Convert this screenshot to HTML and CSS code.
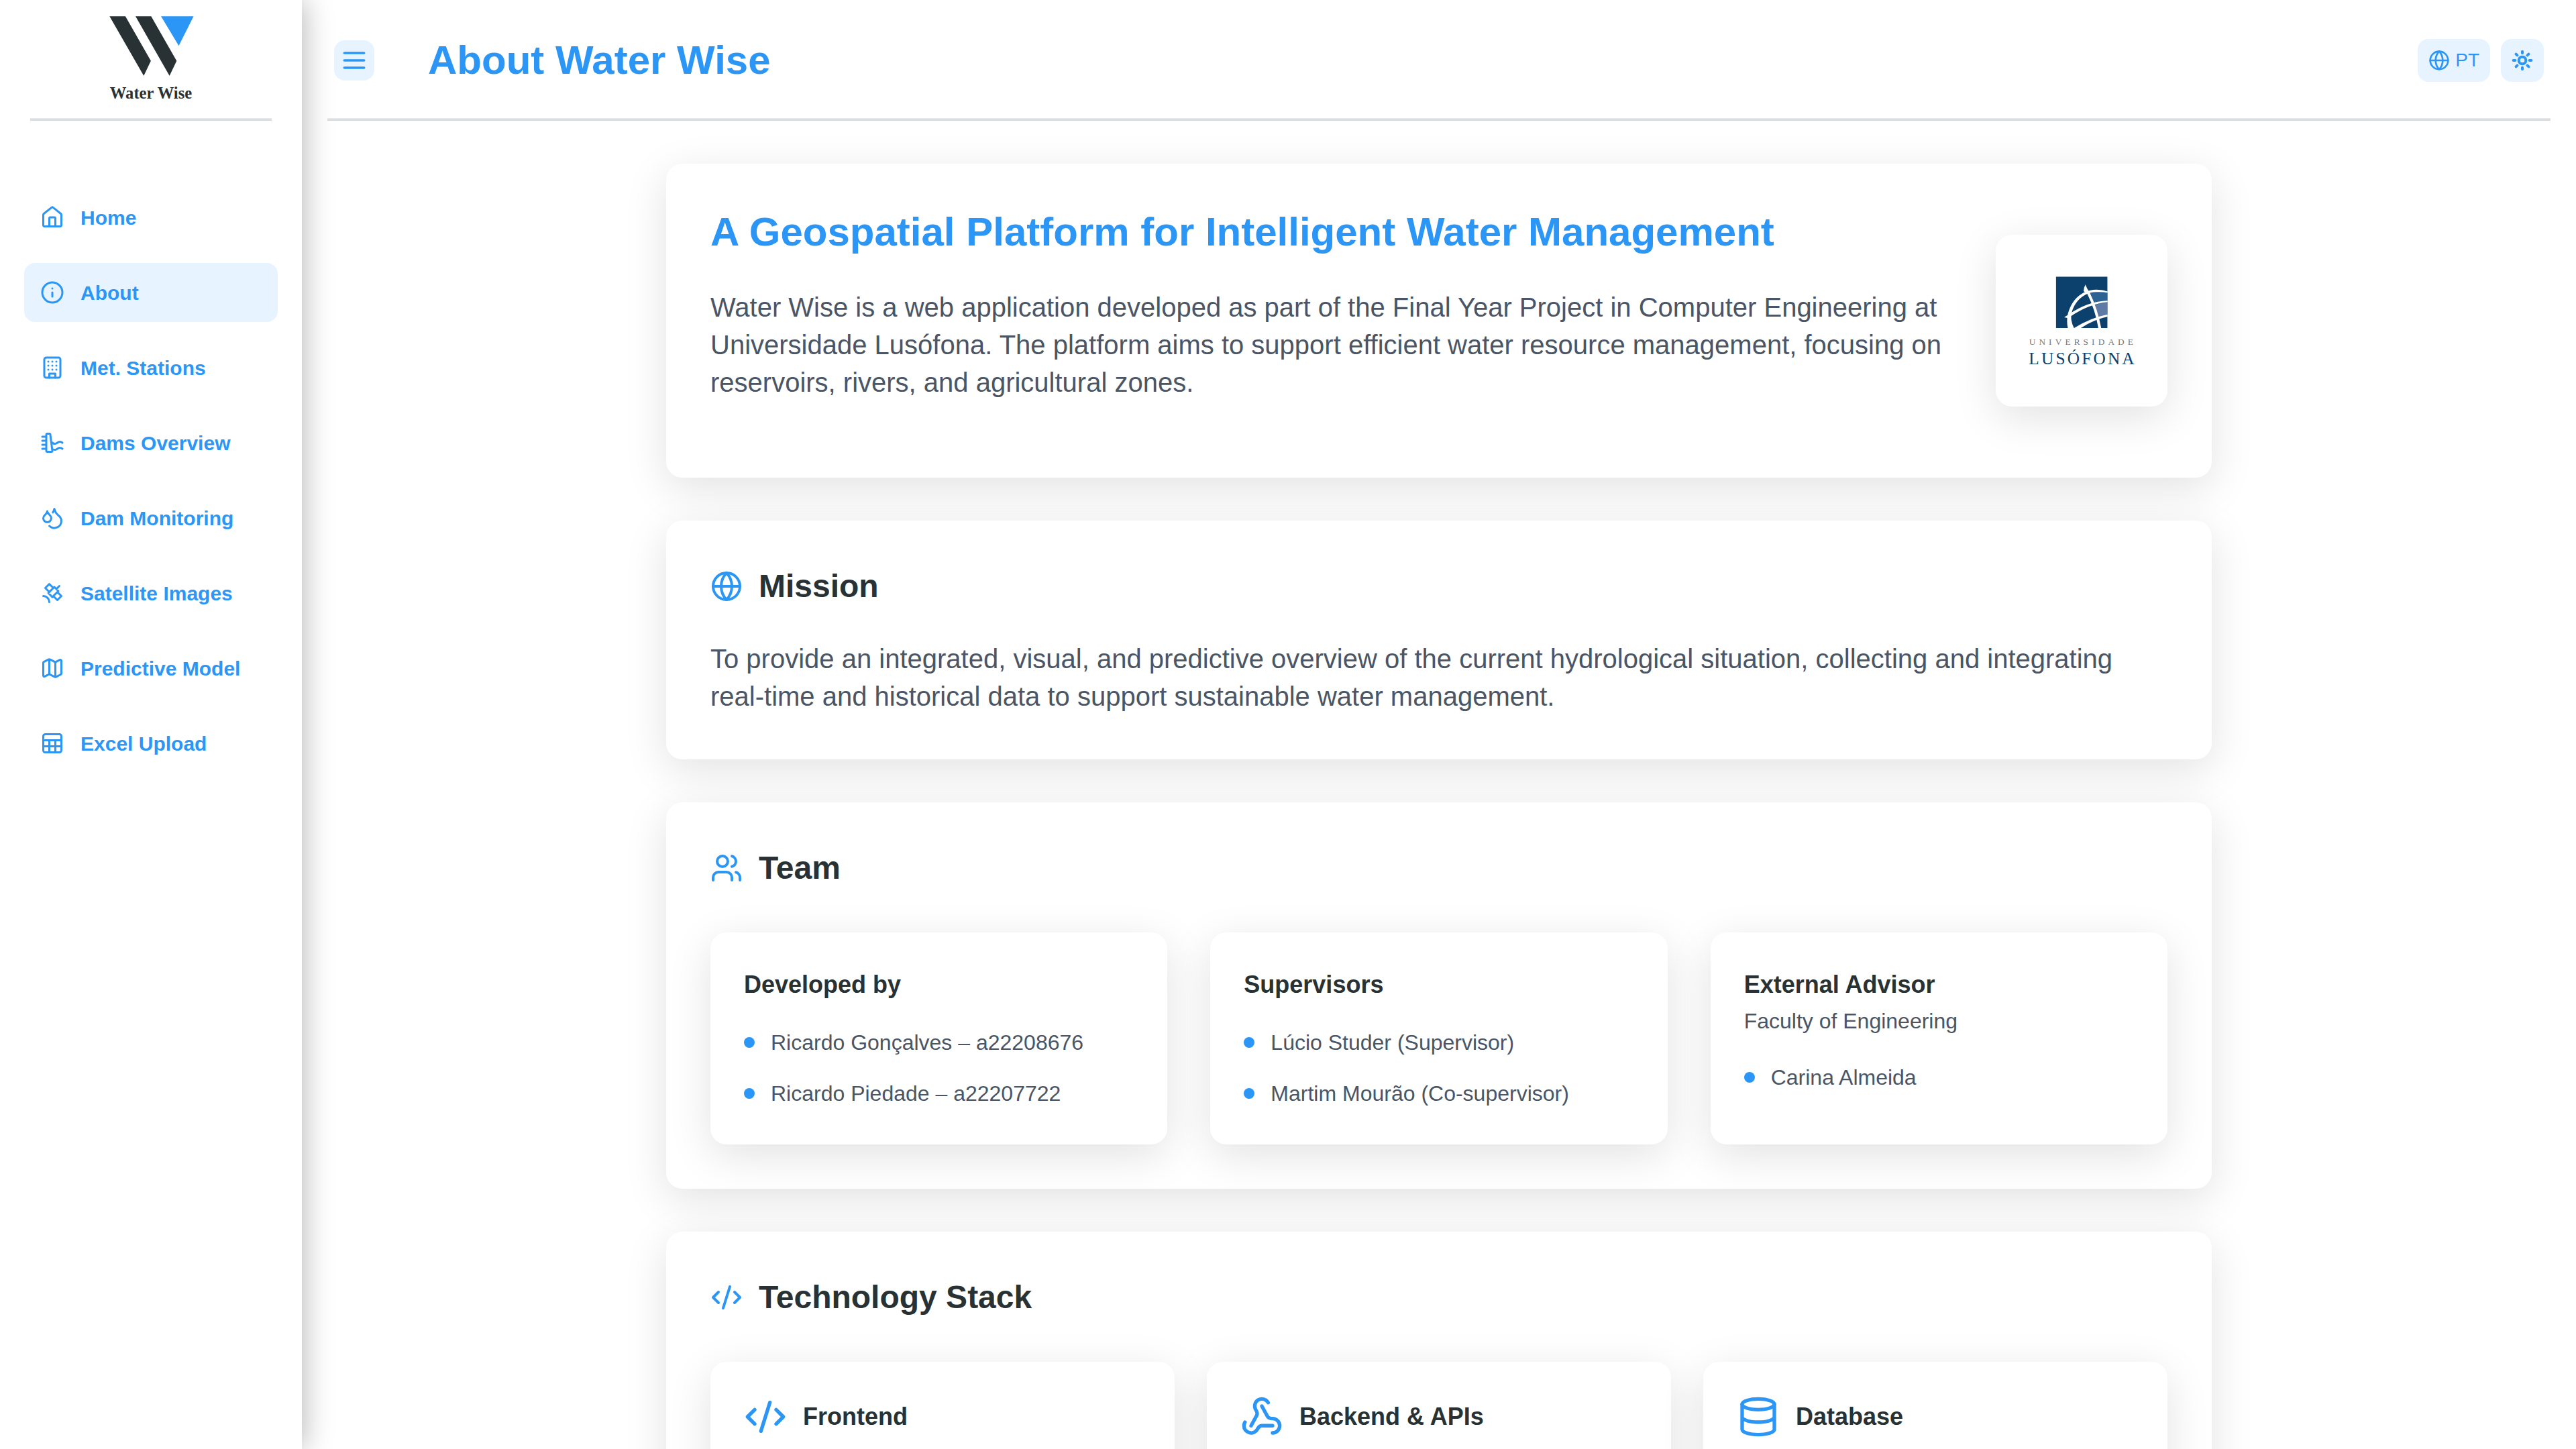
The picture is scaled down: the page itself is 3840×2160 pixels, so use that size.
FILE: index.html
```html
<!DOCTYPE html>
<html lang="en">
<head>
<meta charset="utf-8">
<title>Water Wise - About</title>
<link rel="stylesheet" href="styles.css">
</head>
<body>
<div class="app">
  <aside class="sidebar">
    <div class="brand">
      <svg class="brand-mark" viewBox="163 24 126 90" aria-hidden="true">
        <path class="mark-dark" d="M163.3 24.3h23.6l38 66.4L214.3 113zM202 24.3h23.3l38 66.4L252.7 113z"/>
        <path class="mark-blue" d="M240 24.3h48.6l-22.1 44z"/>
      </svg>
      <span class="brand-name">Water Wise</span>
    </div>
    <div class="rule"></div>
    <nav class="nav">
      <a class="nav-item"><svg class="icon" viewBox="0 0 24 24"><path d="M15 21v-8a1 1 0 0 0-1-1h-4a1 1 0 0 0-1 1v8"/><path d="M3 9.6a1.6 1.6 0 0 1 .6-1.25L11.4 2.1a1 1 0 0 1 1.2 0l7.8 6.25A1.6 1.6 0 0 1 21 9.6V19.8a1.2 1.2 0 0 1-1.2 1.2H4.200a1.2 1.2 0 0 1-1.2-1.2z"/></svg><span>Home</span></a>
      <a class="nav-item active"><svg class="icon" viewBox="0 0 24 24"><circle cx="12" cy="12" r="10"/><path d="M12 16v-4M12 8h.01"/></svg><span>About</span></a>
      <a class="nav-item"><svg class="icon" viewBox="0 0 24 24"><rect x="4" y="2" width="16" height="20" rx="2"/><path d="M9 22v-4h6v4M8 6h.01M16 6h.01M12 6h.01M12 10h.01M12 14h.01M16 10h.01M16 14h.01M8 10h.01M8 14h.01"/></svg><span>Met. Stations</span></a>
      <a class="nav-item"><svg class="icon" viewBox="0 0 24 24"><path d="M11 11.31c1.17.56 1.54 1.69 3.5 1.69 2.5 0 2.5-2 5-2 1.3 0 1.9.5 2.5 1M11.75 18c.35.5 1.45 1 2.75 1 2.5 0 2.5-2 5-2 1.3 0 1.9.5 2.5 1M2 10h4M2 14h4M2 18h4M2 6h4M7 3a1 1 0 0 0-1 1v16a1 1 0 0 0 1 1h4a1 1 0 0 0 1-1L10 4a1 1 0 0 0-1-1z"/></svg><span>Dams Overview</span></a>
      <a class="nav-item"><svg class="icon" viewBox="0 0 24 24"><path d="M7 16.3c2.2 0 4-1.83 4-4.05 0-1.16-.57-2.26-1.71-3.19S7.29 6.75 7 5.3c-.29 1.45-1.14 2.84-2.29 3.76S3 11.1 3 12.25c0 2.22 1.8 4.05 4 4.05z"/><path d="M12.56 6.6A10.97 10.97 0 0 0 14 3.02c.5 2.5 2 4.9 4 6.5s3 3.5 3 5.5a6.98 6.98 0 0 1-11.91 4.97"/></svg><span>Dam Monitoring</span></a>
      <a class="nav-item"><svg class="icon" viewBox="0 0 24 24"><path d="M13 7 9 3 5 7l4 4M17 11l4 4-4 4-4-4M8 12l4 4 6-6-4-4ZM16 8l3-3M9 21a6 6 0 0 0-6-6"/></svg><span>Satellite Images</span></a>
      <a class="nav-item"><svg class="icon" viewBox="0 0 24 24"><path d="M14.106 5.553a2 2 0 0 0 1.788 0l3.659-1.83A1 1 0 0 1 21 4.619v12.764a1 1 0 0 1-.553.894l-4.553 2.277a2 2 0 0 1-1.788 0l-4.212-2.106a2 2 0 0 0-1.788 0l-3.659 1.83A1 1 0 0 1 3 19.381V6.618a1 1 0 0 1 .553-.894l4.553-2.277a2 2 0 0 1 1.788 0zM15 5.764v15M9 3.236v15"/></svg><span>Predictive Model</span></a>
      <a class="nav-item"><svg class="icon" viewBox="0 0 24 24"><rect x="3" y="3" width="18" height="18" rx="2"/><path d="M3 9h18M3 15h18M9 9v12M15 9v12"/></svg><span>Excel Upload</span></a>
    </nav>
  </aside>

  <div class="main">
    <header class="topbar">
      <button class="menu-btn" aria-label="Toggle menu"><svg class="icon" viewBox="0 0 24 24"><path d="M4 6h16M4 12h16M4 18h16"/></svg></button>
      <h1 class="page-title">About Water Wise</h1>
      <div class="actions">
        <button class="action"><svg class="icon" viewBox="0 0 24 24"><circle cx="12" cy="12" r="10"/><path d="M12 2a14.5 14.5 0 0 0 0 20 14.5 14.5 0 0 0 0-20M2 12h20"/></svg>PT</button>
        <button class="action" aria-label="Theme"><svg class="icon icon-heavy" viewBox="0 0 24 24"><circle cx="12" cy="12" r="4"/><path d="M12 2v2M12 20v2M4.93 4.93l1.41 1.41M17.66 17.66l1.41 1.41M2 12h2M20 12h2M6.34 17.66l-1.41 1.41M19.07 4.93l-1.41 1.41"/></svg></button>
      </div>
    </header>
    <div class="rule"></div>

    <main class="content">
      <section class="card intro">
        <div class="intro-text">
          <h2 class="intro-title">A Geospatial Platform for Intelligent Water Management</h2>
          <p class="lead">Water Wise is a web application developed as part of the Final Year Project in Computer Engineering at Universidade Lusófona. The platform aims to support efficient water resource management, focusing on reservoirs, rivers, and agricultural zones.</p>
        </div>
        <div class="university">
          <svg class="university-logo" viewBox="105 90 768 768">
            <clipPath id="sq"><rect x="374" y="277" width="231" height="230"/></clipPath>
            <g clip-path="url(#sq)">
              <rect x="374" y="277" width="231" height="230" fill="#0d416d"/>
              <path d="M520 350Q565 338 605 349V387Q573 390 543 400Z" fill="#2c6291"/>
              <path d="M546 405Q575 393 605 391V449L564 461Q557 430 546 405Z" fill="#5e7ba6"/>
              <path d="M428 509C410 440 456 335 556 335Q584 335 607 344V350Q582 344 556 346C476 347 437 425 443 470Q446 490 456 509Z" fill="#fff"/>
              <path d="M506 313Q512 330 526 350Q562 424 577 509H564Q551 427 514 353L498 342Q499 326 506 313Z" fill="#fff"/>
              <path d="M411 459L430 447Q520 386 607 385V391Q525 398 438 456L430 463Z" fill="#fff"/>
              <path d="M454 508Q528 461 607 446V456Q548 467 484 508Z" fill="#fff"/>
            </g>
            <text class="uni-small" x="254" y="582" textLength="466" lengthAdjust="spacing">UNIVERSIDADE</text>
            <text class="uni-large" x="253" y="670" textLength="472" lengthAdjust="spacing">LUSÓFONA</text>
          </svg>
        </div>
      </section>

      <section class="card">
        <h2 class="section-title"><svg class="icon" viewBox="0 0 24 24"><circle cx="12" cy="12" r="10"/><path d="M12 2a14.5 14.5 0 0 0 0 20 14.5 14.5 0 0 0 0-20M2 12h20"/></svg>Mission</h2>
        <p class="lead mission">To provide an integrated, visual, and predictive overview of the current hydrological situation, collecting and integrating real-time and historical data to support sustainable water management.</p>
      </section>

      <section class="card">
        <h2 class="section-title"><svg class="icon" viewBox="0 0 24 24"><path d="M16 21v-2a4 4 0 0 0-4-4H6a4 4 0 0 0-4 4v2"/><circle cx="9" cy="7" r="4"/><path d="M22 21v-2a4 4 0 0 0-3-3.87M16 3.13a4 4 0 0 1 0 7.75"/></svg>Team</h2>
        <div class="grid team-grid">
          <div class="subcard">
            <h3>Developed by</h3>
            <ul class="people"><li>Ricardo Gonçalves – a22208676</li><li>Ricardo Piedade – a22207722</li></ul>
          </div>
          <div class="subcard">
            <h3>Supervisors</h3>
            <ul class="people"><li>Lúcio Studer (Supervisor)</li><li>Martim Mourão (Co-supervisor)</li></ul>
          </div>
          <div class="subcard">
            <h3>External Advisor</h3>
            <p class="affiliation">Faculty of Engineering</p>
            <ul class="people"><li>Carina Almeida</li></ul>
          </div>
        </div>
      </section>

      <section class="card stack">
        <h2 class="section-title"><svg class="icon" viewBox="0 0 24 24"><path d="m18 16 4-4-4-4M6 8l-4 4 4 4M14.5 4l-5 16"/></svg>Technology Stack</h2>
        <div class="grid stack-grid">
          <div class="subcard tech"><svg class="icon" viewBox="0 0 24 24"><path d="m18 16 4-4-4-4M6 8l-4 4 4 4M14.5 4l-5 16"/></svg><h3>Frontend</h3></div>
          <div class="subcard tech"><svg class="icon" viewBox="0 0 24 24"><path d="M18 16.98h-5.99c-1.1 0-1.95.94-2.48 1.9A4 4 0 0 1 2 17c.01-.7.2-1.4.57-2"/><path d="m6 17 3.13-5.78c.53-.97.1-2.18-.5-3.1a4 4 0 1 1 6.89-4.06"/><path d="m12 6 3.13 5.73C15.66 12.7 16.9 13 18 13a4 4 0 0 1 0 8"/></svg><h3>Backend &amp; APIs</h3></div>
          <div class="subcard tech"><svg class="icon" viewBox="0 0 24 24"><ellipse cx="12" cy="5" rx="9" ry="3"/><path d="M3 5v14a9 3 0 0 0 18 0V5M3 12a9 3 0 0 0 18 0"/></svg><h3>Database</h3></div>
        </div>
      </section>
    </main>
  </div>
</div>
</body>
</html>
```
FILE: styles.css
```css
:root {
  --blue: #2b96f6;
  --blue-soft: #e7f4ff;
  --ink: #283234;
  --text: #4a5565;
}

* { box-sizing: border-box; }

body {
  margin: 0;
  background: #fff;
  color: var(--text);
  font-family: Helvetica, "Liberation Sans", Arial, sans-serif;
}

h1, h2, h3, p, ul { margin: 0; padding: 0; }

button {
  border: 0;
  padding: 0;
  font: inherit;
  color: inherit;
}

.app {
  display: flex;
  height: 2160px;
  overflow: hidden;
}

.icon {
  flex: none;
  width: 36px;
  height: 36px;
  fill: none;
  stroke: var(--blue);
  stroke-width: 2;
  stroke-linecap: round;
  stroke-linejoin: round;
}

.icon-heavy { stroke-width: 3; }

.rule {
  height: 4px;
  border-top: 2px solid #e5e8eb;
  border-bottom: 2px solid #d7d8d9;
}

/* Sidebar */
.sidebar {
  flex: none;
  width: 450px;
  height: 2160px;
  background: #fff;
  box-shadow: 4px 0 40px rgba(0, 0, 0, 0.27);
}

.brand {
  display: flex;
  flex-direction: column;
  align-items: center;
  height: 176px;
  padding-top: 24px;
}

.brand-mark { width: 126px; height: 90px; margin-left: 2px; }
.mark-dark { fill: var(--ink); }
.mark-blue { fill: var(--blue); }

.brand-name {
  margin-top: 11px;
  font: bold 24.6px/28px "Liberation Serif", "Times New Roman", serif;
  color: var(--ink);
}

.sidebar .rule { margin: 0 45px; }

.nav {
  display: flex;
  flex-direction: column;
  gap: 24px;
  padding: 100px 36px 0;
}

.nav-item {
  display: flex;
  align-items: center;
  gap: 24px;
  height: 88px;
  padding: 0 24px;
  border-radius: 16px;
  color: var(--blue);
  font-size: 30px;
  font-weight: 700;
}

.nav-item span { padding-top: 2px; }

.nav-item.active { background: var(--blue-soft); }

/* Top bar */
.main { flex: 1; padding: 0 38px; }

.topbar {
  display: flex;
  align-items: center;
  height: 176px;
  padding: 4px 10px 0;
}

.menu-btn {
  display: grid;
  place-items: center;
  width: 60px;
  height: 60px;
  border-radius: 16px;
  background: var(--blue-soft);
}

.menu-btn .icon { width: 44px; height: 44px; }

.page-title {
  margin-left: 80px;
  color: var(--blue);
  font-size: 60px;
  line-height: 72px;
}

.actions { display: flex; gap: 16px; margin-left: auto; }

.action {
  display: flex;
  align-items: center;
  gap: 8px;
  height: 64px;
  padding: 0 16px;
  border-radius: 16px;
  background: var(--blue-soft);
  color: var(--blue);
  font-size: 28px;
  line-height: 40px;
}

.action .icon { width: 32px; height: 32px; }

/* Content */
.content {
  display: flex;
  flex-direction: column;
  gap: 64px;
  width: 2304px;
  margin: 64px auto 0;
}

.card, .subcard {
  border-radius: 24px;
  background: #fff;
  box-shadow: 0 16px 64px rgba(0, 0, 0, 0.118);
}

.card { padding: 66px; }

.intro { display: flex; align-items: center; gap: 64px; }
.intro-text { flex: 1; padding-bottom: 48px; }

.intro-title {
  margin-bottom: 48px;
  color: var(--blue);
  font-size: 60px;
  line-height: 72px;
}

.lead { font-size: 40px; line-height: 56px; }
.mission { margin-top: 48px; }

.university {
  flex: none;
  width: 256px;
  height: 256px;
  border-radius: 24px;
  background: #fff;
  box-shadow: 0 16px 64px rgba(0, 0, 0, 0.118);
}

.university-logo { display: block; width: 256px; height: 256px; }

.uni-small, .uni-large { font-family: "Liberation Serif", "Times New Roman", serif; }
.uni-small { font-size: 40px; fill: #777; }
.uni-large { font-size: 76px; fill: #0d416d; }

.section-title {
  display: flex;
  align-items: center;
  gap: 24px;
  color: var(--ink);
  font-size: 48px;
  line-height: 64px;
}

.section-title .icon { width: 48px; height: 48px; }

.grid {
  display: grid;
  grid-template-columns: repeat(3, 1fr);
  margin-top: 64px;
}

.team-grid { gap: 64px; }
.stack-grid { gap: 48px; }

.subcard { padding: 50px; }

.subcard h3 {
  color: var(--ink);
  font-size: 36px;
  line-height: 56px;
}

.affiliation { font-size: 32px; line-height: 52px; }

.people {
  display: flex;
  flex-direction: column;
  gap: 24px;
  margin-top: 32px;
  list-style: none;
}

.people li {
  display: flex;
  align-items: center;
  gap: 24px;
  font-size: 32px;
  line-height: 52px;
}

.people li::before {
  content: "";
  width: 16px;
  height: 16px;
  border-radius: 50%;
  background: var(--blue);
}

.tech {
  display: flex;
  align-items: flex-start;
  gap: 24px;
  height: 420px;
}

.tech .icon { width: 64px; height: 64px; }
.tech h3 { margin-top: 4px; }
```
